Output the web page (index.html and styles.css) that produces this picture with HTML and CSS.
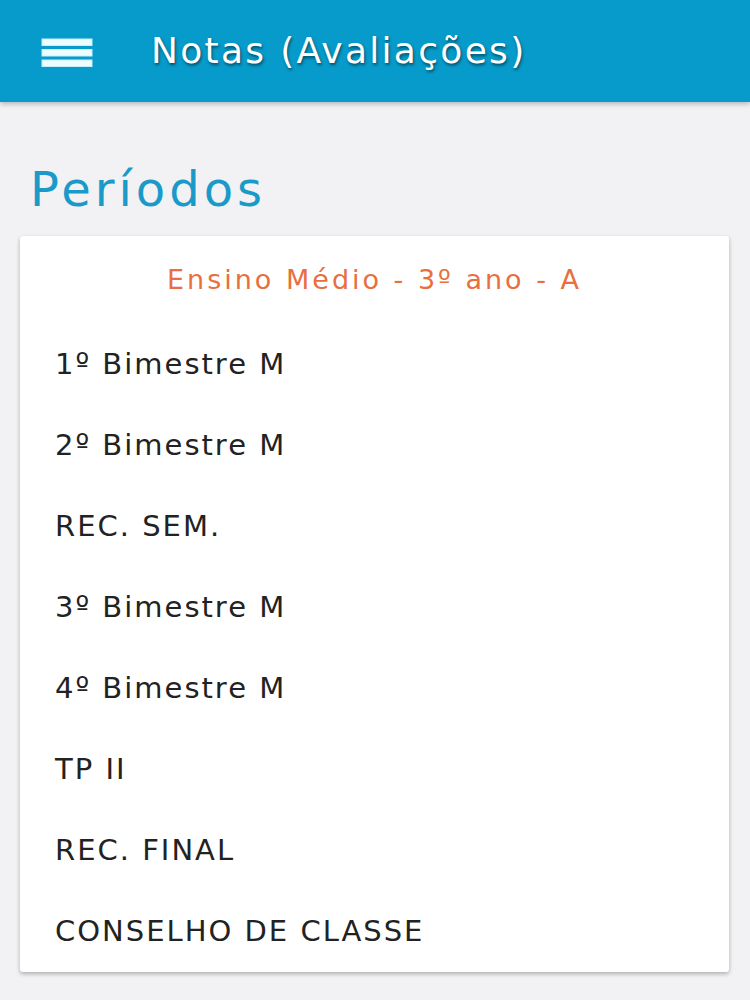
FILE: index.html
```html
<!DOCTYPE html>
<html lang="pt">
<head>
<meta charset="utf-8">
<title>Notas (Avaliações)</title>
<link rel="stylesheet" href="styles.css">
</head>
<body>
<header class="appbar">
  <span class="menu" aria-label="menu">
    <svg width="52" height="30" viewBox="0 0 52 30">
      <rect x="1" y="1" width="50" height="6.5" fill="#eefcff" stroke="#c4effc" stroke-width="1"/>
      <rect x="1" y="11.5" width="50" height="6.5" fill="#eefcff" stroke="#c4effc" stroke-width="1"/>
      <rect x="1" y="22" width="50" height="6.5" fill="#eefcff" stroke="#c4effc" stroke-width="1"/>
    </svg>
  </span>
  <h1 class="title">Notas (Avaliações)</h1>
</header>
<main class="content">
  <h2 class="section-title">Períodos</h2>
  <section class="card">
    <div class="card-header">Ensino Médio - 3º ano - A</div>
    <ul class="periods">
      <li>1º Bimestre M</li>
      <li>2º Bimestre M</li>
      <li>REC. SEM.</li>
      <li>3º Bimestre M</li>
      <li>4º Bimestre M</li>
      <li>TP II</li>
      <li>REC. FINAL</li>
      <li>CONSELHO DE CLASSE</li>
    </ul>
  </section>
</main>
</body>
</html>
```
FILE: styles.css
```css
* { box-sizing: border-box; }
html, body { margin: 0; padding: 0; }
body {
  background: #f2f2f4;
  font-family: "DejaVu Sans", "Liberation Sans", sans-serif;
  color: #222;
  width: 750px;
  height: 1000px;
  overflow: hidden;
}
.appbar {
  height: 102px;
  background: #069bca;
  display: flex;
  align-items: center;
  padding-left: 41px;
  box-shadow: 0 2px 5px rgba(0,0,0,0.25);
  position: relative;
}
.menu {
  display: flex;
  width: 52px;
  height: 30px;
  margin-top: 3px;
}
.title {
  margin: 0 0 0 58px;
  font-size: 36px;
  font-weight: normal;
  letter-spacing: 2.3px;
  color: #fff;
  line-height: 1;
  text-shadow: 1px 2px 3px rgba(0,0,0,0.5);
}
.content {
  padding: 0 21px 0 20px;
}
.section-title {
  margin: 59px 0 19px 10px;
  font-size: 48px;
  line-height: 56px;
  font-weight: normal;
  letter-spacing: 4px;
  color: #1a9ac8;
}
.card {
  background: #fff;
  border-radius: 3px;
  box-shadow: 0 2px 4px rgba(0,0,0,0.28);
}
.card-header {
  height: 88px;
  line-height: 88px;
  text-align: center;
  font-size: 27px;
  letter-spacing: 3px;
  color: #e86f3e;
}
.periods {
  list-style: none;
  margin: 0;
  padding: 0;
}
.periods li {
  height: 81px;
  line-height: 81px;
  padding-left: 35px;
  font-size: 29px;
  letter-spacing: 2px;
  color: #222;
}
```
